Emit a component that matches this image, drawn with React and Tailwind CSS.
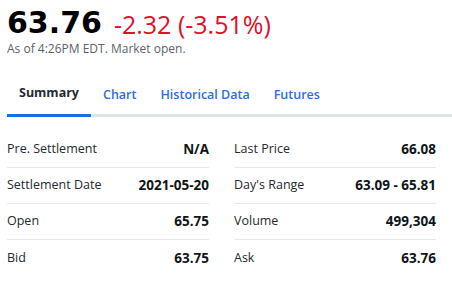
import React from 'react';

const left = [
  ['Pre. Settlement', 'N/A'],
  ['Settlement Date', '2021-05-20'],
  ['Open', '65.75'],
  ['Bid', '63.75'],
];

const right = [
  ['Last Price', '66.08'],
  ["Day's Range", '63.09 - 65.81'],
  ['Volume', '499,304'],
  ['Ask', '63.76'],
];

const tabs = ['Summary', 'Chart', 'Historical Data', 'Futures'];

const Column = ({ rows }) => (
  <div className="flex flex-col">
    {rows.map(([label, value], idx) => (
      <div
        key={label}
        className={`h-9 flex items-center justify-between ${idx < rows.length - 1 ? 'border-b border-[#e6e8ea]' : ''}`}
      >
        <span className="text-[12.5px] text-[#232a31]">{label}</span>
        <span className="text-[13.5px] font-bold text-[#101518]">{value}</span>
      </div>
    ))}
  </div>
);

export default function App() {
  return (
    <div className="w-[452px] h-[283px] bg-white overflow-hidden pl-[7px] pt-[5px]" style={{ fontFamily: '"Open Sans", "Noto Sans", sans-serif' }}>
      <div className="flex items-baseline">
        <span className="text-[30px] leading-[36px] font-bold text-black" style={{ fontFamily: '"DejaVu Sans", sans-serif' }}>63.76</span>
        <span className="ml-[12px] text-[25px] leading-[36px] text-[#e0102a] relative top-[1px]">-2.32 (-3.51%)</span>
      </div>
      <div className="text-[12px] leading-[16px] text-[#5b636a]">As of 4:26PM EDT. Market open.</div>

      <div className="mt-[16px] flex border-b-[3px] border-[#e0e4e9]">
        {tabs.map((t, i) => (
          <div
            key={t}
            className={`h-[44px] px-3 flex items-center text-[12.5px] -mb-[3px] ${i === 0 ? 'font-bold text-[#232a31] border-b-[3px] border-[#1a6ee6]' : 'text-[#2a6fdb] font-semibold'}`}
          >
            {t}
          </div>
        ))}
      </div>

      <div className="mt-[15px] w-[429px] grid grid-cols-2 gap-x-[25px]">
        <Column rows={left} />
        <Column rows={right} />
      </div>
    </div>
  );
}
